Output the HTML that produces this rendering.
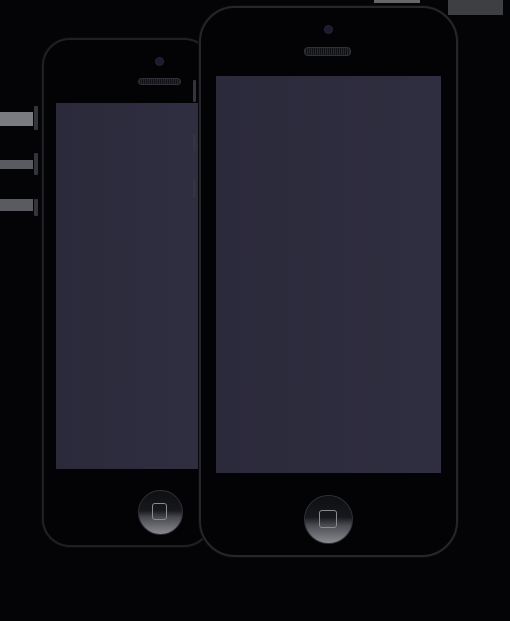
<!DOCTYPE html>
<html><head><style>
body{margin:0;width:510px;height:621px;background:#040407;position:relative;overflow:hidden}
div{position:absolute;box-sizing:border-box}
.ph{background:#030306;border:2px solid #1f2024;box-shadow:0 0 0 1px #0b0b0e}
.scr{background:linear-gradient(90deg,#2b2a3b,#2f2e40)}
.home{border-radius:50%;background:linear-gradient(180deg,#0e0f13 0%,#17181c 45%,#4a4b50 62%,#8a8b90 100%);border:1px solid #2e2f34}
.sq{border:1.5px solid #8a8b90;border-radius:3px}
.cam{border-radius:50%;background:#1b1b2e;border:1px solid #25253a}
.spk{border-radius:4px;background:repeating-linear-gradient(90deg,#26272c 0 1px,#111216 1px 2px);border:1px solid #303136}
.btn{background:#34353a;border-radius:1px}
.gp{background:#5a5b60}
</style></head><body>
<div class="gp" style="left:0;top:112px;width:33px;height:14px;background:#7a7b80"></div>
<div class="gp" style="left:0;top:160px;width:33px;height:9px"></div>
<div class="gp" style="left:0;top:199px;width:33px;height:12px"></div>
<div class="gp" style="left:448px;top:0;width:55px;height:15px;background:#3e3f42"></div>
<div class="gp" style="left:374px;top:0;width:46px;height:3px;background:#666"></div>
<div class="btn" style="left:34px;top:106px;width:4px;height:24px"></div>
<div class="btn" style="left:34px;top:153px;width:4px;height:22px"></div>
<div class="btn" style="left:34px;top:199px;width:4px;height:17px"></div>
<div class="ph" style="left:42px;top:38px;width:170px;height:509px;border-radius:28px"></div>
<div class="scr" style="left:56px;top:103px;width:142px;height:366px"></div>
<div class="cam" style="left:155px;top:57px;width:9px;height:9px"></div>
<div class="spk" style="left:138px;top:78px;width:43px;height:7px"></div>
<div class="home" style="left:138px;top:490px;width:45px;height:45px"></div>
<div class="sq" style="left:152px;top:503px;width:15px;height:17px"></div>
<div class="ph" style="left:199px;top:6px;width:259px;height:551px;border-radius:36px;border-color:#25262a"></div>
<div class="btn" style="left:193px;top:80px;width:3px;height:22px"></div>
<div class="btn" style="left:193px;top:134px;width:3px;height:17px"></div>
<div class="btn" style="left:193px;top:180px;width:3px;height:18px"></div>
<div class="scr" style="left:216px;top:76px;width:225px;height:397px"></div>
<div class="cam" style="left:324px;top:25px;width:9px;height:9px"></div>
<div class="spk" style="left:304px;top:47px;width:47px;height:9px"></div>
<div class="home" style="left:304px;top:495px;width:49px;height:49px"></div>
<div class="sq" style="left:319px;top:510px;width:18px;height:18px"></div>
</body></html>
